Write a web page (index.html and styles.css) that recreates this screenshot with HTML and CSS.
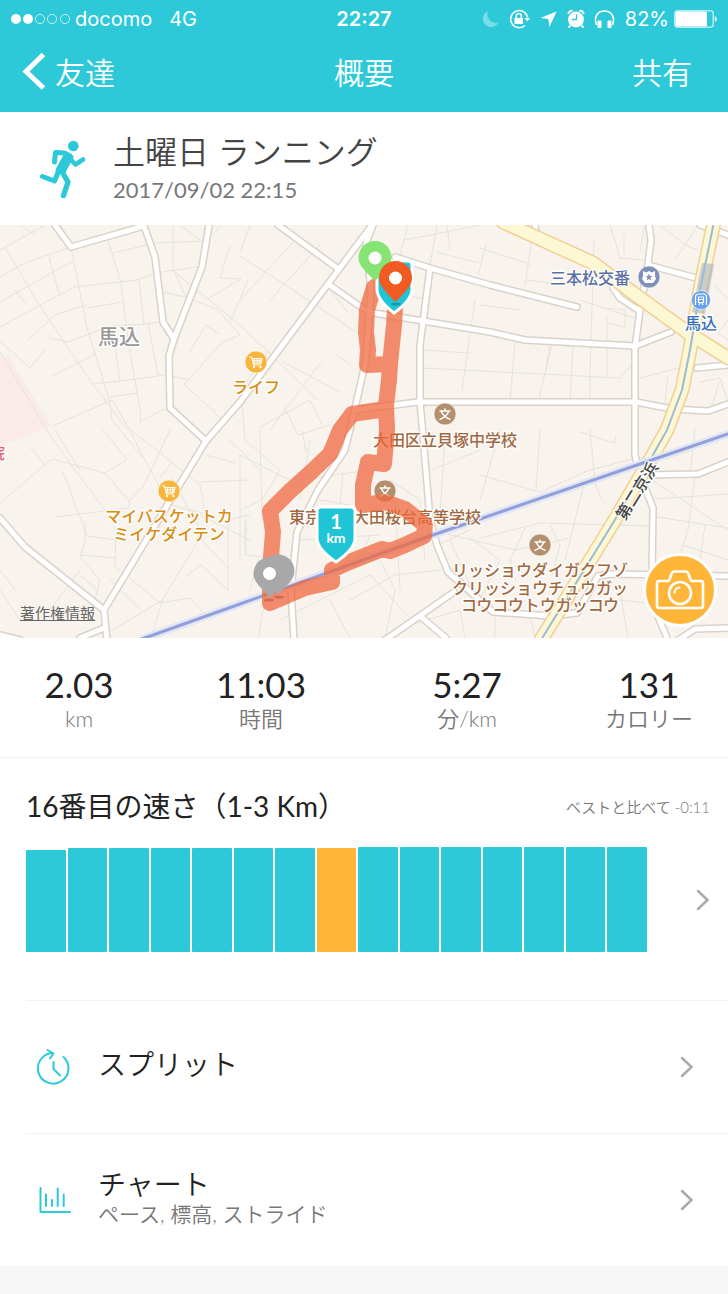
FILE: index.html
```html
<!DOCTYPE html>
<html lang="ja">
<head>
    <meta charset="UTF-8">
    <meta name="viewport" content="width=device-width, initial-scale=1">
    <title>概要</title>
    <link rel="stylesheet" href="styles.css">
</head>
<body>

<header class="header">
    <div class="status">
        <div class="carrier">
            <svg width="60" height="12" viewBox="0 0 60 12" fill="none" stroke="#fff">
                <circle cx="6" cy="6" r="5" fill="#fff" stroke="none"/>
                <circle cx="18" cy="6" r="5" fill="#fff" stroke="none"/>
                <circle cx="30" cy="6" r="4.6" stroke-opacity=".7"/>
                <circle cx="42" cy="6" r="4.6" stroke-opacity=".7"/>
                <circle cx="55" cy="6" r="4.6" stroke-opacity=".7"/>
            </svg>
            <span>docomo</span>
            <span class="network">4G</span>
        </div>
        <div class="clock">22:27</div>
        <div class="device">
            <svg width="139" height="22" viewBox="482 7 139 22" fill="#fff">
                <path d="M489 10a8.300 8.300 0 1 0 10.500 11.500A8.600 8.600 0 0 1 489 10z" opacity=".35"/>
                <path d="M526 24.500a8.600 8.600 0 1 1 2.700-8" fill="none" stroke="#fff" stroke-width="1.500"/>
                <path d="M525.500 17h5.500l-2.700 3.600zM515.500 17h8.500v6h-8.500z"/>
                <path d="M517.300 17.500v-2.500a2.500 2.500 0 0 1 5 0v2.500" fill="none" stroke="#fff" stroke-width="1.400"/>
                <path d="M557.500 10.500l-7 15.500-1.200-8-7.800-1z"/>
                <circle cx="577" cy="18.500" r="7.900"/>
                <path d="M569.500 13.200a3 3 0 0 1 4-3.200M584.500 13.200a3 3 0 0 0-4-3.200M571.500 24.500l-2 2M582.500 24.500l2 2" fill="none" stroke="#fff" stroke-width="2"/>
                <path d="M577.500 13.500v5h-4.500" fill="none" stroke="#2dc9d9" stroke-width="1.300"/>
                <path d="M597.500 24c-3-8 1-14 8-14s11 6 8 14" fill="none" stroke="#fff" stroke-width="1.600"/>
                <rect x="598.500" y="19.500" width="4" height="7.500" rx="1"/>
                <rect x="608.500" y="19.500" width="4" height="7.500" rx="1"/>
            </svg>
            <span>82%</span>
            <svg width="44" height="18" viewBox="0 0 44 18">
                <rect x=".8" y=".8" width="38.400" height="16.400" rx="3" fill="none" stroke="#fff" stroke-opacity=".65" stroke-width="1.500"/>
                <rect x="1.500" y="1.500" width="31.500" height="15" rx="1.500" fill="#fff"/>
                <path d="M40.800 6v6q2.200-.8 2.200-3t-2.200-3z" fill="#fff" opacity=".8"/>
            </svg>
        </div>
    </div>
    <nav class="nav">
        <a class="back" href="#">
            <svg width="24" height="38" viewBox="0 0 24 38" fill="none" stroke="#fff" stroke-width="5">
                <path d="M21.500 2.500L4 19.500l17.500 16.500"/>
            </svg>
            友達
        </a>
        <h1>概要</h1>
        <a class="share" href="#">共有</a>
    </nav>
</header>

<section class="activity">
    <svg class="runner" width="48" height="60" viewBox="39 140 48 60" fill="none" stroke="#2dc9d9" stroke-linecap="round" stroke-linejoin="round">
        <circle cx="73.300" cy="147" r="5.300" fill="#2dc9d9" stroke="none"/>
        <path d="M54.500 163l1-9.500 9 .5 5.500 3" stroke-width="5"/>
        <path d="M66 155.500l5.500 2.500L63.500 173l-6-2z" fill="#2dc9d9" stroke-width="4"/>
        <path d="M69 158.500l6.500 7L83 160.500" stroke-width="4.600"/>
        <path d="M61 171l7 12-4.500 13.500" stroke-width="5.400"/>
        <path d="M59 171l-4.500 11L42.500 177.500" stroke-width="5"/>
    </svg>
    <div>
        <h2>土曜日 ランニング</h2>
        <time datetime="2017-09-02T22:15">2017/09/02 22:15</time>
    </div>
</section>

<section class="map">
    <svg class="canvas" viewBox="0 225 728 413" preserveAspectRatio="xMidYMid slice">
        <defs>
            <!-- 一般道路 -->
            <g id="roads">
                <path d="M55 225L71 247 144 226 155 257 163 322 174 339"/>
                <path d="M209 225L202 267 174 339 169 356 170 408 206 441"/>
                <path d="M372 225L328 284 240 402 206 441 104 610 107 640"/>
                <path d="M278 225L337 268M328 284L368 312 423 321 490 332 525 340 635 346 671 332"/>
                <path d="M373 225L366 243 371 290 366 360 355 408 345 450 318 490 297 532 291 590 294 640"/>
                <path d="M395 257L430 268 490 285 577 307M430 268L420 345 420 402 423 435 430 520 437 545 448 572 493 612 550 616 577 613 598 576 612 574 728 576"/>
                <path d="M355 410L418 402 636 402 672 409 708 411 728 404"/>
                <path d="M649 225L651 240 648 264 640 310 635 348 635 455 640 475 653 508 652 576 656 612 668 640"/>
                <path d="M648 265L696 278M613 288L620 298 638 310M697 368L728 365M700 225L728 235M535 225L536 232"/>
                <path d="M640 475L698 474 728 462M678 640L695 629 728 628"/>
                <path d="M0 518L25 547 104 610M104 628L80 638M0 635L20 640M385 640L454 592M420 616L446 638"/>
            </g>
            <path id="kannana" d="M503 222L593 263 640 298 687 332 728 358"/>
            <path id="keihin" d="M714 222L700 290 690 350 682 390 667 430 650 460 613 523 541 640"/>
            <path id="railway" d="M142 639L240 604 430 536 480 519 640 464 728 434"/>
            <g id="school">
                <circle r="11" fill="#b38f6e" stroke="#fff" stroke-opacity=".6"/>
                <path d="M-5.500-3h11M0-5.500V-3M-4-3Q-1 3.500 5.500 5.500M4-3Q1 3.500-5.500 5.500" fill="none" stroke="#fff" stroke-width="1.600"/>
            </g>
            <g id="shop">
                <circle r="11" fill="#f8b53c" stroke="#fff" stroke-opacity=".6"/>
                <path d="M-7-5h2.500L-2.500 3H5M-4-3.500H6L5 1.200H-3M-1.500-3.500V1M1.200-3.500V1M3.700-3.500V1M-3.600-1.300H5.500" fill="none" stroke="#fff" stroke-width="1.100"/>
                <circle cx="-2" cy="5" r="1.200" fill="#fff"/>
                <circle cx="4.500" cy="5" r="1.200" fill="#fff"/>
            </g>
        </defs>

        <rect y="225" width="728" height="413" fill="#f8f4ed"/>
        <path d="M0 358L8 355 51 426 0 447z" fill="#faebe8"/>

        <!-- 細い道 -->
        <g class="lanes">
            <path d="M0 277L25 263 71 247 87 328 110 402 112 420 142 457M5 247L38 303 92 383 128 430M0 302L73 261M15 290L25 303M0 327L74 287 137 280 155 273 197 267"/>
            <path d="M49 258L59 293M108 241L121 282 128 340 141 415 140 423M28 340L55 315 86 305M50 338L68 342 110 326 145 324 160 322M88 308L122 302M113 253L155 243 207 241M139 280L144 324M148 324L158 375M115 347L120 381M52 376L96 354M92 384L120 381 165 375 190 380M0 341L30 368 45 350M110 397L137 393M141 421L165 409M0 352L53 440 105 510"/>
            <path d="M173 225L173 269 186 297 218 310 240 335 223 342 184 384 225 422M163 292L185 297M230 246L220 278 241 279 209 298M248 280L231 320M190 351L206 325 219 334M222 225L212 235M172 270L240 325 318 400"/>
            <path d="M53 426L112 400 130 430 142 455 170 505 210 515M0 503L52 459 105 473 130 502 128 508 55 517M63 472L87 536 117 540M103 430L127 460 105 473M128 502L143 487 170 430M131 430L200 485 205 512M206 455L236 463 M200 482L250 480M190 510L250 540M85 520L85 542 80 557 100 580 95 600M80 555L116 558M116 528L115 566 160 603 190 598 205 615M80 575L98 591M161 602L200 538 228 568M186 576L201 565 228 590 228 520 250 515M245 520L245 555M150 640L163 600 104 635M30 447L45 465M50 610L80 570M0 590L20 620M0 570L15 590"/>
            <path d="M250 225L241 250M240 256L287 286 362 336M295 240L240 300M320 245L270 300M269 350L241 390 245 440 280 470 262 500 241 510M348 312L330 290M283 362L340 392M321 362L270 430M337 355L350 365M260 427L310 400 322 425M285 408L298 435 330 425M240 455L290 480M260 430L262 520M246 520L246 555 270 558M258 560L250 590M302 430L306 452M300 480L370 470M343 472L340 507M297 540L380 535M390 480L420 500 425 560M395 500L400 590M370 535L360 560M280 620L370 575 410 618M350 600L395 575 440 570M380 560L395 590 385 638M265 600L258 638M295 590L330 583M430 530L515 550 570 538M470 538L500 560 480 600M450 540L470 585"/>
            <path d="M408 225L400 255M437 225L430 265M436 252L478 263M447 225L450 250M486 245L478 275M475 300L462 390M423 350L470 353M422 368L620 378 631 365M405 240L480 225M405 295L425 299"/>
            <path d="M532 240L525 285M594 240L590 375M515 342L510 402 M552 345L538 402M610 225L620 258 645 260M624 235L624 255M640 250L645 225M660 225L685 245 698 250M695 230L675 260M607 315L607 377M607 323L625 327 625 310 607 308M480 248L530 264M527 280L560 284M580 300L634 318M480 305L520 310M590 377L590 402M550 345L545 375M573 347L570 402M640 378L690 365M668 375L665 402M700 382L720 378 728 402M719 382L712 408M728 320L718 333 728 340M715 285L728 300"/>
            <path d="M480 475L540 492 590 470 637 458M540 430L536 488M590 430L595 482M580 432L615 443 616 435M500 430L480 500M480 538L540 523 650 526M525 528L510 560 515 580M550 525L560 545 552 575M585 480L565 560M595 483L603 502M652 480L728 530M695 430L690 475M656 499L728 494M657 517L728 528M695 475L688 530 675 570M705 525L700 560M683 545L728 560M590 610L620 600 645 603M620 590L628 638M530 615L535 638M495 612L495 638M410 625L460 610 465 638"/>
            <path d="M310 440L300 500M320 500L350 505 355 540M330 545L340 560M432 470L480 450M445 440L440 515M437 545L470 530M230 440L260 470M180 225L200 240M20 225L35 235M0 250L45 225M330 600L350 638M240 455L240 560M60 225L70 240M80 470L55 430M160 478L172 462M172 478L200 530M110 580L140 610"/>
        </g>

        <use href="#roads" class="road-edge"/>
        <use href="#roads" class="road"/>
        <use href="#keihin" class="highway-edge"/>
        <use href="#kannana" class="highway-edge"/>
        <use href="#keihin" class="highway"/>
        <use href="#kannana" class="highway"/>
        <path d="M702 263L714 264 705 314 692 312z" fill="#a5a9bd" opacity=".55"/>
        <use href="#keihin" class="subway"/>
        <use href="#railway" class="rail-edge"/>
        <use href="#railway" class="rail"/>

        <!-- 施設 -->
        <use href="#shop" x="256" y="362"/>
        <use href="#shop" x="169" y="491"/>
        <use href="#school" x="445" y="414"/>
        <use href="#school" x="385" y="491"/>
        <use href="#school" x="540" y="545"/>
        <circle cx="649" cy="277" r="11" fill="#7f8fba" stroke="#fff" stroke-opacity=".6"/>
        <path d="M643 271l3 1.500 3-1.500 3 1.500 3-1.500v5l1 3-3 4h-8l-3-4 1-3z" fill="#fff"/>
        <path d="M649 273.500l1 2.500h2.500l-2 1.800.8 2.700-2.300-1.500-2.300 1.500.8-2.700-2-1.800h2.500z" fill="#7f8fba"/>
        <circle cx="701" cy="300" r="9.500" fill="#66a1ec" stroke="#fff" stroke-opacity=".6"/>
        <path d="M695.500 305v-8q0-3 3-3h5q3 0 3 3v8M698.500 302.500v-5.500h5v5.500zM699 305l1-2M703 305l-1-2M698.500 299.500h5" fill="none" stroke="#fff" stroke-width="1.200"/>

        <g class="labels">
            <text class="area" x="119" y="344">馬込</text>
            <g class="shops">
                <text x="256" y="393">ライフ</text>
                <text x="169" y="522">マイバスケットカ</text>
                <text x="169" y="540">ミイケダイテン</text>
            </g>
            <g class="schools">
                <text x="445" y="446">大田区立貝塚中学校</text>
                <text x="385" y="523">東京都立大田桜台高等学校</text>
                <text x="540" y="576">リッショウダイガクフゾ</text>
                <text x="540" y="594">クリッショウチュウガッ</text>
                <text x="540" y="611">コウコウトウガッコウ</text>
            </g>
            <text class="police" x="590" y="284">三本松交番</text>
            <text class="station" x="701" y="329">馬込</text>
            <text class="street" transform="translate(642 494) rotate(-58)">第二京浜</text>
            <text class="hospital" x="-3" y="459">院</text>
        </g>

        <!-- 走ったルート -->
        <path class="route" d="M374 287L367 310 366 332 368 350 367 365 390 364 394 325 395 308M390 364L389 380 386 405 387 430 384 464 368 462 363 485 363 505 385 502 405 509 425 525 424 536 405 545 390 551 382 549 347 563 332 570 332 582 305 588 270 603 270 570 273 532 270 511 290 491 310 473 330 454 340 430 352 414 386 409"/>

        <!-- ピン -->
        <path d="M380 261h28q4 0 4 4v24q0 11-18 24-17-13-17-24v-24q0-4 3-4z" fill="#1fc5d6" stroke="#fff" stroke-width="3"/>
        <path d="M375 241a16.500 16.500 0 0 1 16.500 16.500c0 8-6 13-16.500 23.500-10.500-10.500-16.500-15.500-16.500-23.500A16.500 16.500 0 0 1 375 241z" fill="#86e474"/>
        <circle cx="375" cy="258" r="6.500" fill="#fff"/>
        <ellipse cx="396" cy="304" rx="5" ry="1.500" fill="#0b7f92" opacity=".6"/>
        <path d="M395.500 261a16.500 16.500 0 0 1 16.500 16.500c0 8-6 14-16.500 24.500-10.500-10.500-16.500-16.500-16.500-24.500a16.500 16.500 0 0 1 16.500-16.500z" fill="#f15b22"/>
        <circle cx="395.500" cy="278" r="6.500" fill="#fff"/>

        <ellipse cx="269" cy="600" rx="5" ry="1.500" fill="#b45743" opacity=".6"/>
        <ellipse cx="279" cy="597" rx="5" ry="1.500" fill="#b45743" opacity=".6"/>
        <path d="M278 554.500a16.500 16.500 0 0 1 16.500 16.500c0 8-6 13-16.500 23.500-10.500-10.500-16.500-15.500-16.500-23.500A16.500 16.500 0 0 1 278 554.500zM270 557a16.500 16.500 0 0 1 16.500 16.500c0 8-6 13-16.500 24-10.500-11-16.500-16-16.500-24A16.500 16.500 0 0 1 270 557z" fill="#a8a8a8"/>
        <circle cx="269.500" cy="573.500" r="6.500" fill="#fff"/>

        <path d="M321 507h30q4 0 4 4v27q0 11-19 24-19-13-19-24v-27q0-4 4-4z" fill="#1fc5d6" stroke="#fff" stroke-width="3"/>
        <text class="marker-number" x="336" y="529">1</text>
        <text class="marker-unit" x="336" y="543">km</text>
    </svg>
    <a class="legal" href="#">著作権情報</a>
    <button class="camera" type="button" aria-label="写真を撮る">
        <svg width="50" height="42" viewBox="0 0 50 42" fill="none" stroke="#fff" stroke-width="2.600" stroke-linejoin="round">
            <path d="M4 12h8q2 0 2.700-2l1.800-5q.8-2.500 3-2.500h11q2.200 0 3 2.500l1.800 5q.7 2 2.700 2h8q2 0 2 2v23q0 2-2 2H4q-2 0-2-2V14q0-2 2-2z"/>
            <circle cx="25" cy="24" r="11"/>
            <path d="M19.500 24q0-5 5-5.500" stroke-width="2" stroke-linecap="round"/>
        </svg>
    </button>
</section>

<section class="stats">
    <div><strong>2.03</strong><span>km</span></div>
    <div><strong>11:03</strong><span>時間</span></div>
    <div><strong>5:27</strong><span>分/km</span></div>
    <div><strong>131</strong><span>カロリー</span></div>
</section>

<section class="ranking">
    <div class="ranking-head">
        <h3>16番目の速さ（1-3 Km）</h3>
        <span>ベストと比べて -0:11</span>
    </div>
    <a class="ranking-body" href="#" aria-label="16番目の速さ">
        <div class="bars">
            <i style="height: 97%"></i>
            <i style="height: 99%"></i>
            <i style="height: 99%"></i>
            <i style="height: 99%"></i>
            <i style="height: 99%"></i>
            <i style="height: 99%"></i>
            <i style="height: 99%"></i>
            <i class="current" style="height: 99%"></i>
            <i style="height: 100%"></i>
            <i style="height: 100%"></i>
            <i style="height: 100%"></i>
            <i style="height: 100%"></i>
            <i style="height: 100%"></i>
            <i style="height: 100%"></i>
            <i style="height: 100%"></i>
        </div>
        <svg class="arrow" width="14" height="22" viewBox="0 0 14 22"><path d="M2 2l9.500 9L2 20"/></svg>
    </a>
</section>

<nav class="menu">
    <a href="#">
        <svg class="icon" width="36" height="38" viewBox="35 1048 36 38">
            <path d="M63.500 1057a15.300 15.300 0 1 1-11-4M47.500 1050l6 3.500-3.500 5M53.500 1062v7l6.500 6.500"/>
        </svg>
        <div class="text">
            <b>スプリット</b>
        </div>
        <svg class="arrow" width="14" height="22" viewBox="0 0 14 22"><path d="M2 2l9.500 9L2 20"/></svg>
    </a>
    <a href="#">
        <svg class="icon" width="36" height="38" viewBox="35 1181 36 38">
            <path d="M40.500 1188v24H70M46 1194.500v11.500M52 1200v6M57.700 1188.500V1206M63.700 1194.500v11.500"/>
        </svg>
        <div class="text">
            <b>チャート</b>
            <small>ペース, 標高, ストライド</small>
        </div>
        <svg class="arrow" width="14" height="22" viewBox="0 0 14 22"><path d="M2 2l9.500 9L2 20"/></svg>
    </a>
</nav>

</body>
</html>
```

FILE: styles.css
```css
* {
    padding: 0;
    margin: 0;
    box-sizing: border-box;
}
body {
    min-height: 100vh;
    font-family: Lato, "Noto Sans CJK JP", sans-serif;
    color: #222;
    background: #f6f6f6;
}
a {
    color: inherit;
    text-decoration: none;
}
svg {
    display: block;
    flex-shrink: 0;
}
.header {
    height: 112px;
    color: #fff;
    background: #2dc9d9;
}
.status {
    height: 37px;
    padding: 0 10px;
    display: grid;
    grid-template-columns: 1fr auto 1fr;
    align-items: center;
    font-family: Inter, sans-serif;
    font-size: 20px;
}
.carrier, .device {
    display: flex;
    align-items: center;
    gap: 5px;
}
.carrier .network {
    margin-left: 12px;
}
.clock {
    font-weight: 600;
}
.device {
    justify-content: flex-end;
}
.nav {
    height: 68px;
    padding: 0 22px;
    display: grid;
    grid-template-columns: 1fr auto 1fr;
    align-items: center;
    font-size: 30px;
    font-weight: 350;
}
.nav h1 {
    font-size: 30px;
    font-weight: 350;
}
.nav .back {
    display: flex;
    align-items: center;
    gap: 9px;
}
.nav .share {
    padding-right: 14px;
    text-align: right;
}
.activity {
    height: 113px;
    padding-left: 39px;
    display: flex;
    align-items: center;
    gap: 26px;
    background: #fff;
}
.activity h2 {
    font-size: 32px;
    font-weight: 350;
    line-height: 42px;
    color: #444;
}
.activity time {
    display: block;
    font-size: 22px;
    line-height: 34px;
    color: #777;
}
.map {
    height: 413px;
    position: relative;
    overflow: hidden;
}
.canvas {
    width: 100%;
    height: 100%;
}
.lanes, .road-edge, .road, .highway-edge, .highway, .subway, .rail-edge, .rail, .route {
    fill: none;
    stroke-linejoin: round;
    stroke-linecap: round;
}
.lanes {
    stroke: #e6e3dc;
    stroke-width: 1;
}
.road-edge {
    stroke: #d8d2ca;
    stroke-width: 8;
}
.road {
    stroke: #fff;
    stroke-width: 5;
}
.highway-edge {
    stroke: #f3cf96;
    stroke-width: 15;
}
.highway {
    stroke: #fbf8d3;
    stroke-width: 12;
}
.subway {
    stroke: #9dbad6;
    stroke-width: 2;
}
.rail-edge {
    stroke: #e3e6f3;
    stroke-width: 8;
}
.rail {
    stroke: #929fdb;
    stroke-width: 3;
}
.route {
    stroke: #f0683f;
    stroke-width: 16;
    stroke-opacity: .75;
}
.labels text {
    font-family: "Noto Sans CJK JP", sans-serif;
    font-size: 16px;
    font-weight: 500;
    text-anchor: middle;
    stroke: #fff;
    stroke-width: 3;
    stroke-linejoin: round;
    stroke-opacity: .8;
    paint-order: stroke;
}
.labels .area {
    font-size: 21px;
    fill: #999;
}
.labels .shops {
    fill: #d98d13;
}
.labels .schools {
    fill: #a1683f;
}
.labels .police {
    fill: #5c70a8;
}
.labels .station {
    fill: #3a71b8;
}
.labels .street {
    fill: #444;
}
.labels .hospital {
    fill: #e8606a;
}
.marker-number, .marker-unit {
    font-family: Lato, sans-serif;
    font-weight: 700;
    text-anchor: middle;
    fill: #fff;
}
.marker-number {
    font-size: 20px;
}
.marker-unit {
    font-size: 14px;
}
.legal {
    position: absolute;
    left: 20px;
    bottom: 14px;
    font-size: 15px;
    line-height: 22px;
    color: #666;
    text-decoration: underline;
}
.camera {
    width: 74px;
    height: 74px;
    display: flex;
    align-items: center;
    justify-content: center;
    position: absolute;
    right: 11px;
    bottom: 11px;
    border: 3px solid #fff;
    border-radius: 50%;
    background: #ffb638;
    cursor: pointer;
}
.stats {
    height: 120px;
    padding-top: 24px;
    display: grid;
    grid-template-columns: 79fr 103fr 103fr 79fr;
    text-align: center;
    border-bottom: 1px solid #f2f2f2;
    background: #fff;
}
.stats strong {
    display: block;
    font-size: 35px;
    font-weight: 400;
    line-height: 44px;
}
.stats span {
    display: block;
    font-size: 22px;
    font-weight: 350;
    line-height: 26px;
    color: #777;
}
.ranking {
    height: 242px;
    padding: 28px 18px 0 26px;
    background: #fff;
}
.ranking-head {
    display: flex;
    align-items: center;
    justify-content: space-between;
}
.ranking-head h3 {
    font-size: 28px;
    font-weight: 400;
    line-height: 40px;
}
.ranking-head span {
    font-size: 15px;
    font-weight: 350;
    color: #777;
}
.ranking-body {
    margin-top: 21px;
    display: flex;
    align-items: center;
    gap: 49px;
}
.bars {
    height: 105px;
    flex: 1;
    display: flex;
    align-items: flex-end;
    gap: 2px;
}
.bars i {
    flex: 1;
    border-radius: 1px;
    background: #2dc9d9;
}
.bars .current {
    background: #ffb638;
}
.arrow {
    fill: none;
    stroke: #aaa;
    stroke-width: 2.5;
    stroke-linecap: round;
}
.menu {
    background: #fff;
}
.menu a {
    height: 133px;
    margin-left: 26px;
    padding: 0 34px 0 9px;
    display: flex;
    align-items: center;
    gap: 27px;
    border-top: 1px solid #f2f2f2;
}
.menu .icon {
    fill: none;
    stroke: #2dc9d9;
    stroke-width: 2;
    stroke-linecap: round;
    stroke-linejoin: round;
}
.menu .text {
    flex: 1;
    padding-bottom: 6px;
}
.menu b {
    display: block;
    font-size: 28px;
    font-weight: 350;
    line-height: 34px;
}
.menu small {
    display: block;
    font-size: 21px;
    font-weight: 350;
    line-height: 26px;
    color: #777;
}
```
